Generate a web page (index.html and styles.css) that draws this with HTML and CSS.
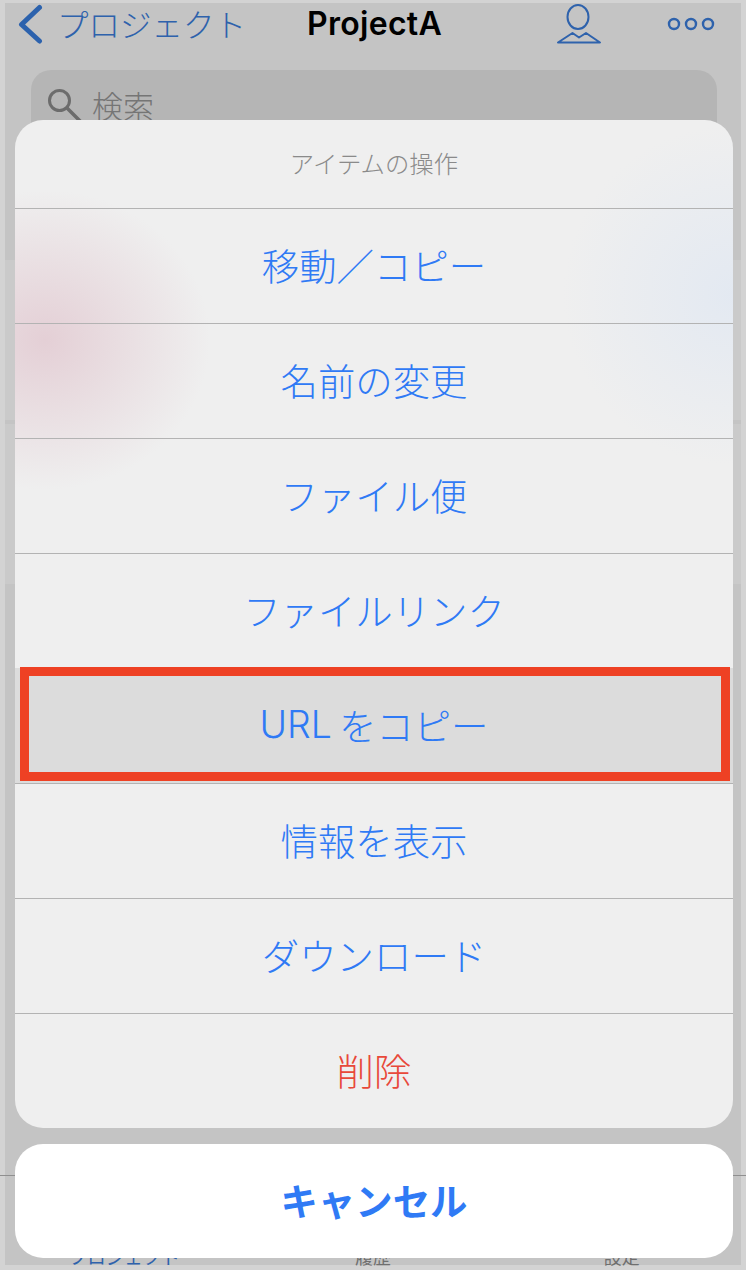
FILE: index.html
```html
<!DOCTYPE html>
<html lang="ja">
<head>
<meta charset="utf-8">
<title>ProjectA</title>
<link rel="stylesheet" href="styles.css">
</head>
<body>
<div class="page">
  <header class="nav">
    <a class="back">
      <svg class="chevron" width="26" height="42" viewBox="0 0 26 42"><path d="M21.500 4.500 L3.500 21.500 L21.500 38" fill="none" stroke="#2c62ad" stroke-width="5" stroke-linecap="round" stroke-linejoin="round"/></svg>
      <span class="back-label">プロジェクト</span>
    </a>
    <h1 class="nav-title">ProjectA</h1>
    <div class="nav-actions">
      <svg width="46" height="40" viewBox="0 0 46 40"><ellipse cx="22" cy="13" rx="10.500" ry="12" fill="none" stroke="#2e62ac" stroke-width="2"/><path d="M2 38.500 L16.500 29 L23 33.500 L30 29 L44 38.500 Z" fill="none" stroke="#2e62ac" stroke-width="2" stroke-linejoin="round"/></svg>
      <svg width="48" height="14" viewBox="0 0 48 14"><circle cx="7" cy="7" r="5" fill="none" stroke="#2e62ac" stroke-width="2.400"/><circle cx="24" cy="7" r="5" fill="none" stroke="#2e62ac" stroke-width="2.400"/><circle cx="41" cy="7" r="5" fill="none" stroke="#2e62ac" stroke-width="2.400"/></svg>
    </div>
  </header>
  <div class="search">
    <svg width="40" height="40" viewBox="0 0 40 40"><circle cx="13.500" cy="13.500" r="10" fill="none" stroke="#6c6c6c" stroke-width="3"/><path d="M21 21 L36 36" stroke="#6c6c6c" stroke-width="3.500" stroke-linecap="round"/></svg>
    <span>検索</span>
  </div>
  <div class="list">
    <div class="list-row"></div>
    <div class="list-row"></div>
  </div>
  <nav class="tabs">
    <span class="tab tab-active">プロジェクト</span>
    <span class="tab">履歴</span>
    <span class="tab">設定</span>
  </nav>
</div>
<div class="sheet">
  <div class="group">
    <div class="group-title">アイテムの操作</div>
    <div class="item">移動／コピー</div>
    <div class="item">名前の変更</div>
    <div class="item">ファイル便</div>
    <div class="item">ファイルリンク</div>
    <div class="item item-marked"><span class="url">URL</span>をコピー<i class="mark"></i></div>
    <div class="item">情報を表示</div>
    <div class="item">ダウンロード</div>
    <div class="item item-danger">削除</div>
  </div>
  <div class="cancel">キャンセル</div>
</div>
</body>
</html>
```
FILE: styles.css
```css
* { box-sizing: border-box; }
html, body { margin: 0; height: 100%; }
body {
  position: relative;
  width: 746px;
  height: 1270px;
  overflow: hidden;
  font-family: "Noto Sans CJK JP", "Noto Sans", sans-serif;
  font-weight: 300;
  background: #c4c4c4;
}
.page {
  height: 1270px;
  display: flex;
  flex-direction: column;
  background: #c4c4c4;
  border-style: solid;
  border-color: #d3d3d3;
  border-width: 3px 5px 5px 5px;
}
.nav {
  display: grid;
  grid-template-columns: 1fr auto 1fr;
  grid-template-rows: 42px;
  align-items: center;
  height: 42px;
  padding: 0 10px;
  color: #2e62ac;
}
.back {
  display: flex;
  align-items: center;
  gap: 13px;
  white-space: nowrap;
}
.back-label { font-size: 31.500px; line-height: 36px; padding-bottom: 2px; }
.chevron { flex: none; margin-left: 3px; }
.nav-title {
  margin: 0;
  padding: 0 0 0 3px;
  font-family: "Inter", "Liberation Sans", sans-serif;
  font-size: 32px;
  font-weight: 600;
  letter-spacing: 0.3px;
  line-height: 42px;
  color: #000;
}
.nav-actions {
  display: flex;
  justify-content: flex-end;
  align-items: center;
  gap: 65px;
  padding-right: 16px;
}
.search {
  display: flex;
  align-items: flex-start;
  gap: 6px;
  height: 100px;
  margin: 25px 24px 0 26px;
  padding: 17px 0 0 15px;
  border-radius: 20px;
  background: #b5b5b5;
  color: #757575;
  font-size: 31px;
  line-height: 36px;
}
.list {
  display: flex;
  flex-direction: column;
  gap: 4px;
  margin-top: 90px;
}
.list-row { height: 160px; background: #cacaca; }
.tabs {
  display: grid;
  grid-template-columns: repeat(3, 1fr);
  margin: auto -5px 0;
  height: 90px;
  padding-top: 70px;
  border-top: 1px solid #8f8f8f;
  font-size: 18px;
  line-height: 20px;
  font-weight: 400;
  color: #6f6f6f;
  text-align: center;
}
.tab-active { color: #2e62ac; font-size: 18.500px; }

.sheet {
  position: absolute;
  top: 120px;
  left: 15px;
  width: 718px;
  display: flex;
  flex-direction: column;
  gap: 16px;
}
.group {
  border-radius: 28px;
  overflow: hidden;
  background:
    radial-gradient(ellipse 165px 150px at 30px 220px, rgba(222, 190, 200, 0.65), rgba(222, 190, 200, 0) 100%),
    radial-gradient(ellipse 170px 170px at 718px 175px, rgba(225, 232, 242, 0.85), rgba(225, 232, 242, 0) 100%),
    #efefef;
}
.group-title {
  height: 88px;
  display: flex;
  align-items: center;
  justify-content: center;
  padding-bottom: 3px;
  font-size: 24.400px;
  color: #8a8a8a;
}
.item {
  position: relative;
  height: 115px;
  display: flex;
  align-items: center;
  justify-content: center;
  padding-bottom: 3px;
  border-top: 1px solid #b3b3b3;
  font-size: 37.400px;
  color: #2f7af5;
}
.url { font-family: "Inter", "Noto Sans", sans-serif; margin-right: 7px; font-size: 37.400px; }
.item-marked { background: #dcdcdc; border-top-color: #dcdcdc; }
.mark {
  position: absolute;
  top: -2px;
  left: 5px;
  width: 710px;
  height: 114px;
  border: 9.500px solid #ee4124;
}
.item-danger { color: #e8483a; }
.cancel {
  height: 114px;
  display: flex;
  align-items: center;
  justify-content: center;
  padding-bottom: 3px;
  border-radius: 28px;
  background: #fff;
  font-size: 37.400px;
  font-weight: 700;
  color: #2f7af5;
}
```
